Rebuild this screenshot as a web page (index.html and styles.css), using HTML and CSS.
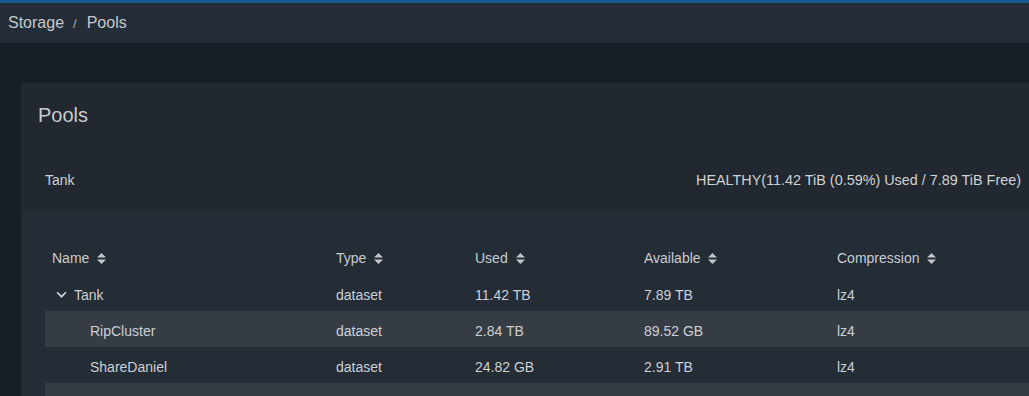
FILE: index.html
```html
<!DOCTYPE html>
<html lang="en">
<head>
<meta charset="utf-8">
<title>Storage / Pools</title>
<link rel="stylesheet" href="styles.css">
</head>
<body>
<div class="topline"></div>
<header class="crumbs">
  <span class="crumb">Storage</span>
  <span class="sep">/</span>
  <span class="crumb">Pools</span>
</header>
<main class="content">
  <section class="card">
    <div class="card-head">
      <h1 class="title">Pools</h1>
      <div class="pool-line">
        <span class="pool-name">Tank</span>
        <span class="pool-status">HEALTHY(11.42 TiB (0.59%) Used / 7.89 TiB Free)</span>
      </div>
    </div>
    <div class="card-body">
      <table class="grid">
        <colgroup>
          <col class="c-name"><col class="c-type"><col class="c-used"><col class="c-avail"><col class="c-comp">
        </colgroup>
        <thead>
          <tr>
            <th>Name <svg class="sort" viewBox="0 0 10 12"><path d="M5 0 L10 5 H0 Z M0 7 H10 L5 12 Z"/></svg></th>
            <th>Type <svg class="sort" viewBox="0 0 10 12"><path d="M5 0 L10 5 H0 Z M0 7 H10 L5 12 Z"/></svg></th>
            <th>Used <svg class="sort" viewBox="0 0 10 12"><path d="M5 0 L10 5 H0 Z M0 7 H10 L5 12 Z"/></svg></th>
            <th>Available <svg class="sort" viewBox="0 0 10 12"><path d="M5 0 L10 5 H0 Z M0 7 H10 L5 12 Z"/></svg></th>
            <th>Compression <svg class="sort" viewBox="0 0 10 12"><path d="M5 0 L10 5 H0 Z M0 7 H10 L5 12 Z"/></svg></th>
          </tr>
        </thead>
        <tbody>
          <tr>
            <td class="root"><svg class="chev" viewBox="0 0 10 7"><path d="M1 1 L5 5 L9 1"/></svg>Tank</td>
            <td>dataset</td><td>11.42 TB</td><td>7.89 TB</td><td>lz4</td>
          </tr>
          <tr class="alt">
            <td class="child">RipCluster</td>
            <td>dataset</td><td>2.84 TB</td><td>89.52 GB</td><td>lz4</td>
          </tr>
          <tr>
            <td class="child">ShareDaniel</td>
            <td>dataset</td><td>24.82 GB</td><td>2.91 TB</td><td>lz4</td>
          </tr>
          <tr class="alt">
            <td class="child">&nbsp;</td>
            <td></td><td></td><td></td><td></td>
          </tr>
        </tbody>
      </table>
    </div>
  </section>
</main>
</body>
</html>
```

FILE: styles.css
```css
html, body {
  margin: 0;
  padding: 0;
}
body {
  background: #181e25;
  color: #c9ccd0;
  font-family: "Liberation Sans", Arial, sans-serif;
  width: 1029px;
  height: 396px;
  overflow: hidden;
}
.topline {
  height: 3px;
  background: #155b8f;
}
.crumbs {
  height: 40px;
  background: #242d37;
  display: flex;
  align-items: center;
  padding-left: 8px;
  font-size: 16px;
  color: #c4c8cc;
}
.sep {
  margin: 0 10px 0 9px;
  font-size: 13px;
  color: #aab0b6;
}
.content {
  padding: 40px 0 0 21px;
}
.card {
  width: 1024px;
  background: #212830;
}
.card-head {
  padding: 20px 24px 21px 17px;
}
.title {
  margin: 0;
  font-size: 20px;
  font-weight: normal;
  line-height: 24px;
  color: #c8cbcf;
}
.pool-line {
  display: flex;
  justify-content: space-between;
  align-items: center;
  margin-top: 43px;
  padding-left: 7px;
  height: 20px;
  font-size: 14px;
  color: #d0d3d6;
}
.pool-status {
  font-size: 14.4px;
  white-space: nowrap;
}
.card-body {
  background: #242c35;
  padding: 28px 0 20px 24px;
}
.grid {
  border-collapse: collapse;
  table-layout: fixed;
  width: 1000px;
  font-size: 14px;
}
.c-name { width: 284px; }
.c-type { width: 139px; }
.c-used { width: 169px; }
.c-avail { width: 193px; }
.c-comp { width: 215px; }
.grid th, .grid td {
  text-align: left;
  font-weight: normal;
  vertical-align: middle;
  white-space: nowrap;
  color: #cdd0d4;
}
.grid th {
  height: 35px;
  padding: 1px 0 0 7px;
  color: #c9cdd1;
}
.grid td {
  height: 33px;
  padding: 3px 0 0 7px;
}
.sort {
  width: 9px;
  height: 11px;
  margin-left: 4px;
  vertical-align: -1px;
  fill: #c3c7cb;
}
.grid tr.alt td {
  background: #363c44;
}
.grid td.root {
  padding-left: 11px;
}
.chev {
  width: 11px;
  height: 8px;
  margin-right: 7px;
  vertical-align: 1px;
  fill: none;
  stroke: #cdd0d4;
  stroke-width: 1.6;
}
.grid td.child {
  padding-left: 45px;
}
```
